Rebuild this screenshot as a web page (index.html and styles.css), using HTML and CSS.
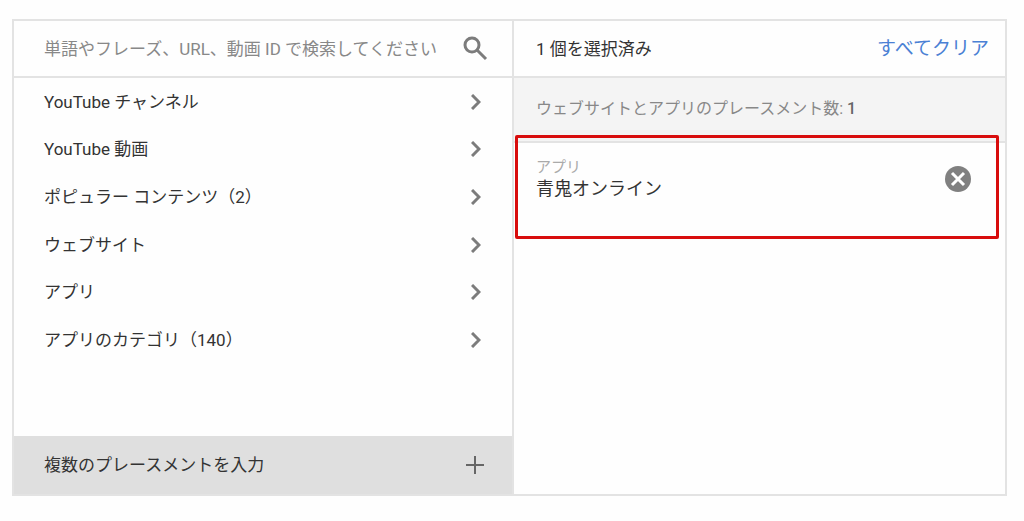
FILE: index.html
```html
<!doctype html>
<html lang="ja">
<head>
<meta charset="UTF-8" />
<title>プレースメント</title>
<link rel="stylesheet" href="styles.css">
</head>
<body>
	<div id="picker">
		<div id="browse">
			<form class="bar" id="search">
				<input type="text" id="query" aria-label="検索" placeholder="単語やフレーズ、URL、動画 ID で検索してください" />
				<button type="submit" id="search-btn" aria-label="検索">
					<svg width="26" height="26" viewBox="0 0 26 26"><circle cx="10" cy="9" r="7" /><path d="M15 14l9 9" /></svg>
				</button>
			</form>
			<ul id="categories">
				<li><button type="button">YouTube チャンネル<svg class="arrow" viewBox="0 0 10 16"><path d="M1 1l7 7-7 7" /></svg></button></li>
				<li><button type="button">YouTube 動画<svg class="arrow" viewBox="0 0 10 16"><path d="M1 1l7 7-7 7" /></svg></button></li>
				<li><button type="button">ポピュラー コンテンツ（2）<svg class="arrow" viewBox="0 0 10 16"><path d="M1 1l7 7-7 7" /></svg></button></li>
				<li><button type="button">ウェブサイト<svg class="arrow" viewBox="0 0 10 16"><path d="M1 1l7 7-7 7" /></svg></button></li>
				<li><button type="button">アプリ<svg class="arrow" viewBox="0 0 10 16"><path d="M1 1l7 7-7 7" /></svg></button></li>
				<li><button type="button">アプリのカテゴリ（140）<svg class="arrow" viewBox="0 0 10 16"><path d="M1 1l7 7-7 7" /></svg></button></li>
			</ul>
			<button type="button" id="add-many">複数のプレースメントを入力
				<svg width="20" height="20" viewBox="0 0 20 20"><path d="M10 1v18M1 10h18" /></svg>
			</button>
		</div>
		<div id="selected">
			<div class="bar">
				<span>1 個を選択済み</span>
				<a href="#" id="clear">すべてクリア</a>
			</div>
			<div id="group">ウェブサイトとアプリのプレースメント数: <b>1</b></div>
			<div id="item">
				<div>
					<div class="type">アプリ</div>
					<div class="name">青鬼オンライン</div>
				</div>
				<button type="button" id="remove" aria-label="削除">
					<svg width="28" height="28" viewBox="0 0 28 28"><circle cx="14" cy="14" r="13" /><path d="M8 8l12 12M20 8l-12 12" /></svg>
				</button>
			</div>
		</div>
	</div>
</body>
</html>
```
FILE: styles.css
```css
html, body, ul, li, form, input, button{
	margin:0;
	padding:0;
}
*{
	box-sizing:border-box;
}
body{
	padding:19px 17px 25px 12px;
	background-color:#fefefe;
	color:#333;
	font:17px/24px Roboto, "Noto Sans CJK JP", sans-serif;
}
input, button{
	border:0;
	background:none;
	color:inherit;
	font:inherit;
}
button{
	cursor:pointer;
}
svg{
	display:block;
	flex:none;
	fill:none;
	stroke:#7c7c7c;
}
#picker{
	display:grid;
	grid-template-columns:502fr 493fr;
	min-height:477px;
	border:2px solid #e3e3e3;
}
#browse{
	display:flex;
	flex-direction:column;
	border-right:2px solid #e3e3e3;
}
.bar{
	display:flex;
	align-items:center;
	justify-content:space-between;
	height:57px;
	border-bottom:2px solid #e3e3e3;
}
#search{
	padding:0 24px 0 30px;
}
#query{
	flex:1;
	min-width:0;
	outline:0;
}
#query::placeholder{
	color:#888;
	opacity:1;
}
#search-btn svg{
	stroke-width:3;
}
#categories{
	display:grid;
	grid-template-rows:repeat(6, 1fr);
	height:286px;
	margin-bottom:auto;
	list-style:none;
}
#categories button{
	display:flex;
	align-items:center;
	justify-content:space-between;
	width:100%;
	height:100%;
	padding:0 31px 0 30px;
	text-align:left;
}
.arrow{
	width:10px;
	height:16px;
	stroke-width:3;
}
#add-many{
	display:flex;
	align-items:center;
	justify-content:space-between;
	height:58px;
	padding:0 27px 0 30px;
	background-color:#dfdfdf;
}
#add-many svg{
	stroke:#666;
	stroke-width:2;
}
#selected .bar{
	padding:0 16px 0 22px;
}
#clear{
	color:#4a80d4;
	font-size:19px;
	text-decoration:none;
}
#group{
	height:65px;
	padding:19px 22px;
	border-bottom:2px solid #e3e3e3;
	background-color:#f4f4f4;
	color:#888;
	font-size:16px;
}
#group b{
	color:#666;
	font-weight:500;
}
#item{
	position:relative;
	display:flex;
	justify-content:space-between;
	padding:14px 33px 38px 22px;
}
/* highlight frame around the selected app */
#item:before{
	content:"";
	position:absolute;
	top:-8px;
	right:6px;
	bottom:0;
	left:1px;
	border:3px solid #d80c0c;
	border-radius:2px;
	pointer-events:none;
}
.type{
	color:#aaa;
	font-size:15px;
	line-height:20px;
}
.name{
	font-size:18px;
}
#remove{
	align-self:center;
}
#remove circle{
	fill:#808080;
	stroke:none;
}
#remove path{
	stroke:#fff;
	stroke-width:3;
}
```
